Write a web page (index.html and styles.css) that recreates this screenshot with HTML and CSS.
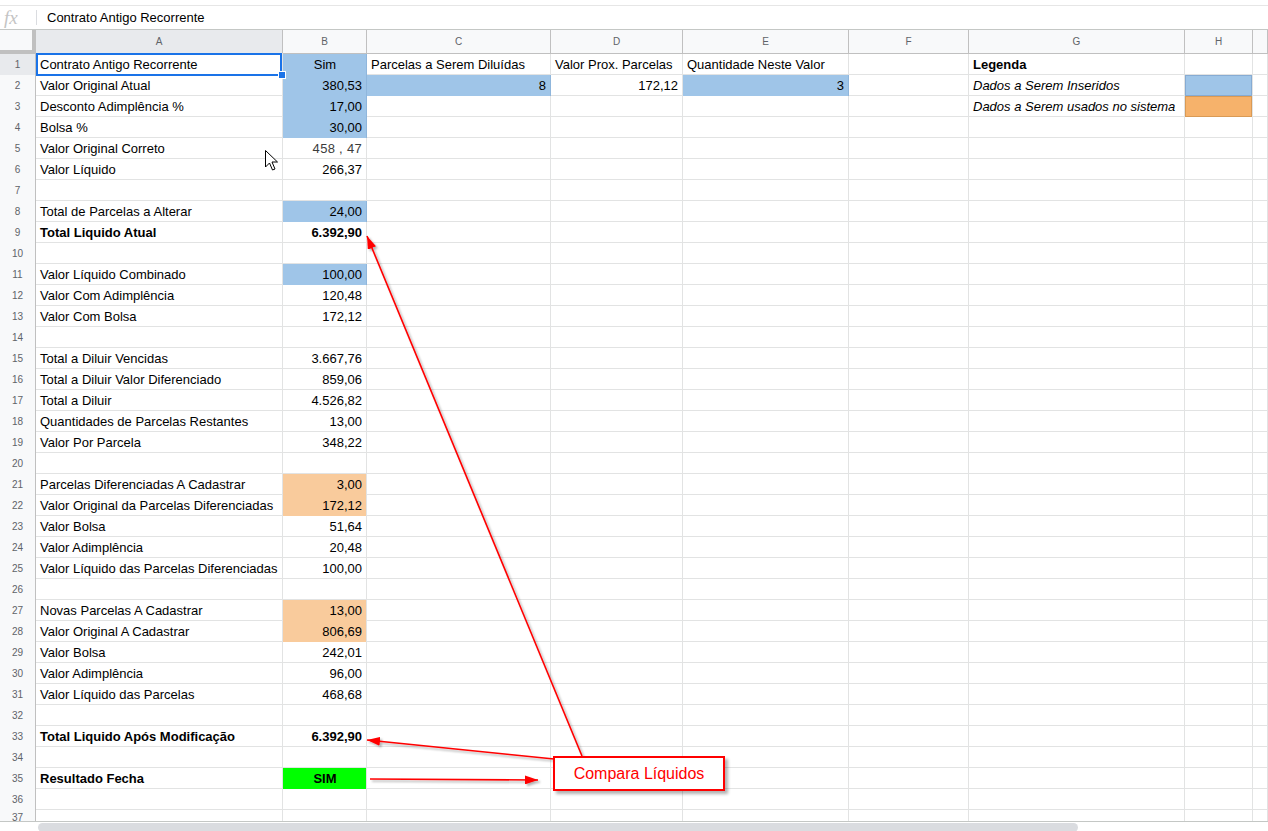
FILE: index.html
```html
<!DOCTYPE html>
<html lang="pt">
<head>
<meta charset="utf-8">
<title>Planilha</title>
<link rel="stylesheet" href="styles.css">
</head>
<body>
<div class="fxbar"><span class="fx">fx</span><span class="sep"></span><span class="fxtext">Contrato Antigo Recorrente</span></div>
<div class="sheet">
  <div class="row head"><span class="corner"></span><span class="ch sel">A</span><span class="ch">B</span><span class="ch">C</span><span class="ch">D</span><span class="ch">E</span><span class="ch">F</span><span class="ch">G</span><span class="ch">H</span><span class="ch"></span></div>
  <div class="row"><span class="rh sel">1</span><span class="c active">Contrato Antigo Recorrente</span><span class="c blue ctr">Sim</span><span class="c">Parcelas a Serem Diluídas</span><span class="c">Valor Prox. Parcelas</span><span class="c">Quantidade Neste Valor</span><span class="c"></span><span class="c b">Legenda</span><span class="c"></span><span class="c"></span></div>
  <div class="row"><span class="rh">2</span><span class="c">Valor Original Atual</span><span class="c blue n">380,53</span><span class="c blue n">8</span><span class="c n">172,12</span><span class="c blue n">3</span><span class="c"></span><span class="c i">Dados a Serem Inseridos</span><span class="c lblue"></span><span class="c"></span></div>
  <div class="row"><span class="rh">3</span><span class="c">Desconto Adimplência %</span><span class="c blue n">17,00</span><span class="c"></span><span class="c"></span><span class="c"></span><span class="c"></span><span class="c i">Dados a Serem usados no sistema</span><span class="c lorange"></span><span class="c"></span></div>
  <div class="row"><span class="rh">4</span><span class="c">Bolsa %</span><span class="c blue n">30,00</span><span class="c"></span><span class="c"></span><span class="c"></span><span class="c"></span><span class="c"></span><span class="c"></span><span class="c"></span></div>
  <div class="row"><span class="rh">5</span><span class="c">Valor Original Correto</span><span class="c n gray">458 , 47</span><span class="c"></span><span class="c"></span><span class="c"></span><span class="c"></span><span class="c"></span><span class="c"></span><span class="c"></span></div>
  <div class="row"><span class="rh">6</span><span class="c">Valor Líquido</span><span class="c n">266,37</span><span class="c"></span><span class="c"></span><span class="c"></span><span class="c"></span><span class="c"></span><span class="c"></span><span class="c"></span></div>
  <div class="row"><span class="rh">7</span><span class="c"></span><span class="c"></span><span class="c"></span><span class="c"></span><span class="c"></span><span class="c"></span><span class="c"></span><span class="c"></span><span class="c"></span></div>
  <div class="row"><span class="rh">8</span><span class="c">Total de Parcelas a Alterar</span><span class="c blue n">24,00</span><span class="c"></span><span class="c"></span><span class="c"></span><span class="c"></span><span class="c"></span><span class="c"></span><span class="c"></span></div>
  <div class="row"><span class="rh">9</span><span class="c b">Total Liquido Atual</span><span class="c n b">6.392,90</span><span class="c"></span><span class="c"></span><span class="c"></span><span class="c"></span><span class="c"></span><span class="c"></span><span class="c"></span></div>
  <div class="row"><span class="rh">10</span><span class="c"></span><span class="c"></span><span class="c"></span><span class="c"></span><span class="c"></span><span class="c"></span><span class="c"></span><span class="c"></span><span class="c"></span></div>
  <div class="row"><span class="rh">11</span><span class="c">Valor Líquido Combinado</span><span class="c blue n">100,00</span><span class="c"></span><span class="c"></span><span class="c"></span><span class="c"></span><span class="c"></span><span class="c"></span><span class="c"></span></div>
  <div class="row"><span class="rh">12</span><span class="c">Valor Com Adimplência</span><span class="c n">120,48</span><span class="c"></span><span class="c"></span><span class="c"></span><span class="c"></span><span class="c"></span><span class="c"></span><span class="c"></span></div>
  <div class="row"><span class="rh">13</span><span class="c">Valor Com Bolsa</span><span class="c n">172,12</span><span class="c"></span><span class="c"></span><span class="c"></span><span class="c"></span><span class="c"></span><span class="c"></span><span class="c"></span></div>
  <div class="row"><span class="rh">14</span><span class="c"></span><span class="c"></span><span class="c"></span><span class="c"></span><span class="c"></span><span class="c"></span><span class="c"></span><span class="c"></span><span class="c"></span></div>
  <div class="row"><span class="rh">15</span><span class="c">Total a Diluir Vencidas</span><span class="c n">3.667,76</span><span class="c"></span><span class="c"></span><span class="c"></span><span class="c"></span><span class="c"></span><span class="c"></span><span class="c"></span></div>
  <div class="row"><span class="rh">16</span><span class="c">Total a Diluir Valor Diferenciado</span><span class="c n">859,06</span><span class="c"></span><span class="c"></span><span class="c"></span><span class="c"></span><span class="c"></span><span class="c"></span><span class="c"></span></div>
  <div class="row"><span class="rh">17</span><span class="c">Total a Diluir</span><span class="c n">4.526,82</span><span class="c"></span><span class="c"></span><span class="c"></span><span class="c"></span><span class="c"></span><span class="c"></span><span class="c"></span></div>
  <div class="row"><span class="rh">18</span><span class="c">Quantidades de Parcelas Restantes</span><span class="c n">13,00</span><span class="c"></span><span class="c"></span><span class="c"></span><span class="c"></span><span class="c"></span><span class="c"></span><span class="c"></span></div>
  <div class="row"><span class="rh">19</span><span class="c">Valor Por Parcela</span><span class="c n">348,22</span><span class="c"></span><span class="c"></span><span class="c"></span><span class="c"></span><span class="c"></span><span class="c"></span><span class="c"></span></div>
  <div class="row"><span class="rh">20</span><span class="c"></span><span class="c"></span><span class="c"></span><span class="c"></span><span class="c"></span><span class="c"></span><span class="c"></span><span class="c"></span><span class="c"></span></div>
  <div class="row"><span class="rh">21</span><span class="c">Parcelas Diferenciadas A Cadastrar</span><span class="c orange n">3,00</span><span class="c"></span><span class="c"></span><span class="c"></span><span class="c"></span><span class="c"></span><span class="c"></span><span class="c"></span></div>
  <div class="row"><span class="rh">22</span><span class="c">Valor Original da Parcelas Diferenciadas</span><span class="c orange n">172,12</span><span class="c"></span><span class="c"></span><span class="c"></span><span class="c"></span><span class="c"></span><span class="c"></span><span class="c"></span></div>
  <div class="row"><span class="rh">23</span><span class="c">Valor Bolsa</span><span class="c n">51,64</span><span class="c"></span><span class="c"></span><span class="c"></span><span class="c"></span><span class="c"></span><span class="c"></span><span class="c"></span></div>
  <div class="row"><span class="rh">24</span><span class="c">Valor Adimplência</span><span class="c n">20,48</span><span class="c"></span><span class="c"></span><span class="c"></span><span class="c"></span><span class="c"></span><span class="c"></span><span class="c"></span></div>
  <div class="row"><span class="rh">25</span><span class="c">Valor Líquido das Parcelas Diferenciadas</span><span class="c n">100,00</span><span class="c"></span><span class="c"></span><span class="c"></span><span class="c"></span><span class="c"></span><span class="c"></span><span class="c"></span></div>
  <div class="row"><span class="rh">26</span><span class="c"></span><span class="c"></span><span class="c"></span><span class="c"></span><span class="c"></span><span class="c"></span><span class="c"></span><span class="c"></span><span class="c"></span></div>
  <div class="row"><span class="rh">27</span><span class="c">Novas Parcelas A Cadastrar</span><span class="c orange n">13,00</span><span class="c"></span><span class="c"></span><span class="c"></span><span class="c"></span><span class="c"></span><span class="c"></span><span class="c"></span></div>
  <div class="row"><span class="rh">28</span><span class="c">Valor Original A Cadastrar</span><span class="c orange n">806,69</span><span class="c"></span><span class="c"></span><span class="c"></span><span class="c"></span><span class="c"></span><span class="c"></span><span class="c"></span></div>
  <div class="row"><span class="rh">29</span><span class="c">Valor Bolsa</span><span class="c n">242,01</span><span class="c"></span><span class="c"></span><span class="c"></span><span class="c"></span><span class="c"></span><span class="c"></span><span class="c"></span></div>
  <div class="row"><span class="rh">30</span><span class="c">Valor Adimplência</span><span class="c n">96,00</span><span class="c"></span><span class="c"></span><span class="c"></span><span class="c"></span><span class="c"></span><span class="c"></span><span class="c"></span></div>
  <div class="row"><span class="rh">31</span><span class="c">Valor Líquido das Parcelas</span><span class="c n">468,68</span><span class="c"></span><span class="c"></span><span class="c"></span><span class="c"></span><span class="c"></span><span class="c"></span><span class="c"></span></div>
  <div class="row"><span class="rh">32</span><span class="c"></span><span class="c"></span><span class="c"></span><span class="c"></span><span class="c"></span><span class="c"></span><span class="c"></span><span class="c"></span><span class="c"></span></div>
  <div class="row"><span class="rh">33</span><span class="c b">Total Liquido Após Modificação</span><span class="c n b">6.392,90</span><span class="c"></span><span class="c"></span><span class="c"></span><span class="c"></span><span class="c"></span><span class="c"></span><span class="c"></span></div>
  <div class="row"><span class="rh">34</span><span class="c"></span><span class="c"></span><span class="c"></span><span class="c"></span><span class="c"></span><span class="c"></span><span class="c"></span><span class="c"></span><span class="c"></span></div>
  <div class="row"><span class="rh">35</span><span class="c b">Resultado Fecha</span><span class="c green ctr b">SIM</span><span class="c"></span><span class="c"></span><span class="c"></span><span class="c"></span><span class="c"></span><span class="c"></span><span class="c"></span></div>
  <div class="row"><span class="rh">36</span><span class="c"></span><span class="c"></span><span class="c"></span><span class="c"></span><span class="c"></span><span class="c"></span><span class="c"></span><span class="c"></span><span class="c"></span></div>
  <div class="row last"><span class="rh">37</span><span class="c"></span><span class="c"></span><span class="c"></span><span class="c"></span><span class="c"></span><span class="c"></span><span class="c"></span><span class="c"></span><span class="c"></span></div>
</div>
<div class="scrollbar"><div class="thumb"></div></div>

<svg class="annot" width="1268" height="831" viewBox="0 0 1268 831" xmlns="http://www.w3.org/2000/svg">
  <defs>
    <marker id="ah" viewBox="0 0 10 10" refX="10" refY="5" markerWidth="13" markerHeight="9" markerUnits="userSpaceOnUse" orient="auto" preserveAspectRatio="none">
      <path d="M0,0 L10,5 L0,10 Z" fill="#ff0000"/>
    </marker>
    <filter id="sh" x="-10%" y="-10%" width="130%" height="130%">
      <feDropShadow dx="2" dy="2" stdDeviation="1" flood-color="#000" flood-opacity="0.3"/>
    </filter>
  </defs>
  <g filter="url(#sh)" stroke="#ff0000" stroke-width="1.6" fill="none">
    <line x1="582" y1="756" x2="367" y2="236" marker-end="url(#ah)"/>
    <line x1="554" y1="759" x2="367" y2="740" marker-end="url(#ah)"/>
    <line x1="370" y1="779" x2="538" y2="780" marker-end="url(#ah)"/>
  </g>
  <path class="cursor" d="M265.5,150.5 L265.5,167 L269.5,163 L272.5,170 L275,169 L272,162 L277.5,162 Z" fill="#fff" stroke="#000" stroke-width="1"/>
</svg>
<div class="callout">Compara Líquidos</div>
</body>
</html>
```

FILE: styles.css
```css
html, body {
  margin: 0;
  padding: 0;
  background: #fff;
  width: 1268px;
  height: 831px;
  overflow: hidden;
  position: relative;
  font-family: "Liberation Sans", Arial, sans-serif;
  font-size: 13px;
  color: #000;
}

.fxbar {
  margin-top: 5px;
  height: 23px;
  border-top: 1px solid #e6e6e6;
  border-bottom: 1px solid #c4c7c5;
  display: flex;
  align-items: center;
}
.fx {
  width: 30px;
  padding-left: 4px;
  box-sizing: border-box;
  font-family: "Liberation Serif", serif;
  font-style: italic;
  font-size: 19px;
  color: #c4c4c4;
  line-height: 1;
}
.sep {
  width: 1px;
  height: 15px;
  background: #dadce0;
  margin-left: 6px;
  margin-right: 10px;
}
.fxtext {
  font-size: 13px;
  color: #000;
}

.sheet {
  height: 791px;
  overflow: hidden;
  border-bottom: 1px solid #c4c7c5;
}
.row {
  display: grid;
  grid-template-columns: 36px 247px 84px 184px 132px 166px 120px 216px 68px 1fr;
  height: 21px;
  box-sizing: border-box;
  border-bottom: 1px solid #e2e3e3;
}
.row.head {
  height: 24px;
  border-bottom: 1px solid #c0c0c0;
  background: #f8f9fa;
}
.row.last .rh { line-height: 16px; }
.corner {
  background: #f8f9fa;
  border-right: 4px solid #c0c0c0;
  border-bottom: 4px solid #c0c0c0;
  margin-bottom: -1px;
}
.ch {
  border-right: 1px solid #c0c0c0;
  font-size: 10px;
  color: #5f6368;
  text-align: center;
  line-height: 23px;
}
.ch.sel { background: #e8eaed; }
.rh {
  background: #f8f9fa;
  border-right: 1px solid #c0c0c0;
  font-size: 10px;
  color: #5f6368;
  text-align: center;
  line-height: 21px;
}
.rh.sel { background: #e8eaed; }

.c {
  border-right: 1px solid #e2e3e3;
  padding: 0 3px 0 4px;
  line-height: 22px;
  white-space: nowrap;
  overflow: hidden;
}
.n { text-align: right; padding-right: 4px; }
.ctr { text-align: center; }
.b { font-weight: bold; }
.i { font-style: italic; }
.gray { color: #3c3c3c; letter-spacing: 0.3px; }

.blue { background: #9fc5e8; border-right-color: #8fb6dc; }
.orange { background: #f9cb9c; }
.green { background: #00ff00; }
.lblue { background: #9fc5e8; box-shadow: inset 0 0 0 1px #86abd3; }
.lorange { background: #f6b26b; box-shadow: inset 0 0 0 1px #d99a55; }

.active {
  position: relative;
  overflow: visible;
  box-shadow: inset 0 0 0 2px #1a73e8;
  margin-top: -1px;
  padding-top: 1px;
  margin-bottom: -1px;
}
.active::after {
  content: "";
  position: absolute;
  right: -4px;
  bottom: -3px;
  width: 6px;
  height: 6px;
  background: #1a73e8;
  border: 1px solid #fff;
  z-index: 2;
}

.scrollbar {
  height: 9px;
  padding-top: 1px;
  position: relative;
}
.thumb {
  margin-left: 38px;
  width: 1040px;
  height: 9px;
  background: #dadce0;
  border-radius: 5px;
}

.annot {
  position: absolute;
  left: 0;
  top: 0;
  pointer-events: none;
  z-index: 5;
}
.callout {
  position: absolute;
  left: 553px;
  top: 756px;
  width: 172px;
  height: 35px;
  box-sizing: border-box;
  border: 2px solid #ff0000;
  background: #fff;
  color: #ff0000;
  font-size: 16px;
  text-align: center;
  line-height: 31px;
  box-shadow: 3px 3px 3px rgba(0,0,0,0.3);
  z-index: 6;
}
```
